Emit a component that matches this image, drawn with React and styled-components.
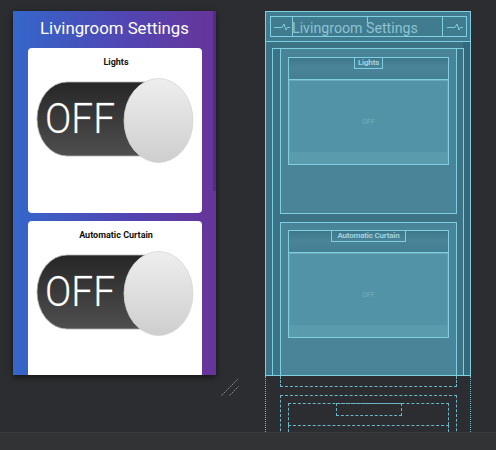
import React from 'react';
import styled, { createGlobalStyle } from 'styled-components';

const GlobalStyle = createGlobalStyle`
  html, body {
    margin: 0;
    padding: 0;
    background: #2b2d30;
    font-family: Roboto, "Liberation Sans", sans-serif;
  }
`;

const Canvas = styled.div`
  width: 496px;
  height: 450px;
  display: flex;
  flex-direction: column;
  overflow: hidden;
`;

const Stage = styled.div`
  height: 432px;
  flex-shrink: 0;
  display: flex;
  align-items: flex-start;
  gap: 26px;
  padding: 11px 0 0 13px;
  box-sizing: border-box;
  overflow: hidden;
`;

const StatusBar = styled.div`
  flex: 1;
  background: #323335;
  border-top: 1px solid #393a3c;
`;

/* ---------- design preview ---------- */

const PreviewColumn = styled.div`
  display: flex;
  flex-direction: column;
`;

const Phone = styled.div`
  width: 203px;
  height: 364px;
  display: flex;
  background: linear-gradient(90deg, #3467cb 0%, #5146b3 55%, #673499 100%);
  box-shadow: 0 2px 6px rgba(0, 0, 0, 0.55);
  overflow: hidden;
`;

const PhoneContent = styled.div`
  flex: 1;
  display: flex;
  flex-direction: column;
`;

const ScrollTrack = styled.div`
  width: 3px;
  display: flex;
  flex-direction: column;
`;

const ScrollThumb = styled.div`
  height: 180px;
  background: rgba(20, 10, 60, 0.22);
`;

const AppTitle = styled.div`
  height: 30px;
  line-height: 34px;
  text-align: center;
  color: #ffffff;
  font-size: 16.8px;
  padding-left: 3px;
`;

const CardList = styled.div`
  display: flex;
  flex-direction: column;
  gap: 8px;
  padding: 7px 11px 0 15px;
`;

const Card = styled.div`
  height: 165px;
  flex-shrink: 0;
  background: #ffffff;
  border-radius: 4px;
  padding: 8px 6px 0 8px;
  box-sizing: border-box;
  display: flex;
  flex-direction: column;
`;

const CardHeader = styled.div`
  height: 22px;
  font-size: 9px;
  line-height: 12px;
  font-weight: 700;
  color: #111111;
  text-align: center;
`;

const ToggleSvg = styled.svg`
  width: 160px;
  height: 85px;
  display: block;
`;

const ResizeHandle = styled.svg`
  width: 18px;
  height: 18px;
  margin: 3px 0 0 208px;
  display: block;
`;

const Toggle = ({ id }) => (
  <ToggleSvg viewBox="0 0 160 85" preserveAspectRatio="none">
    <defs>
      <linearGradient id={`pill-${id}`} x1="0" y1="0" x2="0" y2="1">
        <stop offset="0" stopColor="#262626" />
        <stop offset="1" stopColor="#4f4f4f" />
      </linearGradient>
      <linearGradient id={`knob-${id}`} x1="0" y1="0" x2="0" y2="1">
        <stop offset="0" stopColor="#eeeeee" />
        <stop offset="1" stopColor="#cecece" />
      </linearGradient>
    </defs>
    <rect x="1" y="4" width="150" height="74" rx="30" ry="37" fill={`url(#pill-${id})`} stroke="#b4b4b4" strokeWidth="0.8" />
    <text
      x="9"
      y="55"
      fontSize="42"
      fontWeight="300"
      textLength="70"
      lengthAdjust="spacingAndGlyphs"
      fill="#ffffff"
      stroke="#909090"
      strokeWidth="0.5"
      paintOrder="stroke"
      fontFamily="Roboto, 'Liberation Sans', sans-serif"
    >
      OFF
    </text>
    <ellipse cx="122.5" cy="42.5" rx="34.5" ry="42" fill={`url(#knob-${id})`} stroke="#d6d6d6" strokeWidth="0.8" />
  </ToggleSvg>
);

/* ---------- blueprint ---------- */

const Blueprint = styled.div`
  width: 206px;
  display: flex;
  flex-direction: column;
`;

const line = '#7fcfe2';

const BpScreen = styled.div`
  height: 365px;
  box-sizing: border-box;
  border: 1px solid ${line};
  background: linear-gradient(90deg, #3d7387 calc(100% - 7px), #34697c 0);
  display: flex;
  flex-direction: column;
  overflow: hidden;
`;

const BpTitleRow = styled.div`
  height: 30px;
  flex-shrink: 0;
  box-sizing: border-box;
  border-bottom: 1px solid ${line};
  background: #417b8f;
  padding: 4px 3px 0 4px;
`;

const BpTitleBox = styled.div`
  height: 21px;
  box-sizing: border-box;
  border: 1px solid ${line};
  display: flex;
`;

const BpIcon = styled.div`
  width: ${p => p.$w}px;
  box-sizing: border-box;
  border-left: ${p => (p.$right ? `1px solid ${line}` : 'none')};
  border-right: ${p => (p.$right ? 'none' : `1px solid ${line}`)};
  display: flex;
  align-items: center;
  justify-content: center;
`;

const BpTitleText = styled.div`
  flex: 1;
  position: relative;
  font-size: 14.2px;
  line-height: 19px;
  padding-top: 2px;
  color: #8cc3d2;
  white-space: nowrap;
  overflow: hidden;
  margin-left: -1px;

  &::before {
    content: '';
    position: absolute;
    left: 75px;
    top: 0;
    width: 1px;
    height: 6px;
    background: ${line};
  }
`;

const BpBody = styled.div`
  flex: 1;
  padding: 6px 6px 0 6px;
`;

const BpScroll = styled.div`
  height: 100%;
  box-sizing: border-box;
  border: 1px solid ${line};
  border-bottom: none;
  padding: 0 6px 0 7px;
  display: flex;
  flex-direction: column;
  gap: 8px;
`;

const BpCard = styled.div`
  height: ${p => (p.$first ? 165 : 166)}px;
  flex-shrink: 0;
  box-sizing: border-box;
  border: 1px solid ${line};
  border-top-width: ${p => (p.$first ? 0 : 1)}px;
  background: #4a8498;
  padding: ${p => (p.$first ? 8 : 7)}px 7px 0 7px;
  display: flex;
  flex-direction: column;
`;

const BpHeader = styled.div`
  height: 22px;
  box-sizing: border-box;
  border: 1px solid ${line};
  border-bottom: none;
  background: linear-gradient(#3f788b 0%, #4a8498 45%, #447e92 100%);
  display: flex;
  justify-content: center;
`;

const BpLabel = styled.div`
  height: 12px;
  width: ${p => p.$w}px;
  margin-top: -1px;
  box-sizing: border-box;
  border: 1px solid ${line};
  font-size: 8px;
  line-height: 10px;
  font-weight: 700;
  color: #9ed2df;
  text-align: center;
  white-space: nowrap;
  overflow: hidden;
  letter-spacing: -0.2px;
`;

const BpImage = styled.div`
  height: 86px;
  box-sizing: border-box;
  border: 1px solid ${line};
  background: linear-gradient(#5393a7 0%, #5393a7 86%, #5a9bae 86%, #5a9bae 100%);
  box-shadow: inset 0 1px 0 #6aaabd, inset 1px 0 0 #5f9fb2, inset -1px 0 0 #5f9fb2;
  display: flex;
  align-items: center;
  justify-content: center;
  font-size: 7px;
  color: #73b0c1;
`;

const BpOverflow = styled.div`
  height: 60px;
  box-sizing: border-box;
  border-left: 1px dotted #6fb8cb;
  border-right: 1px dotted #6fb8cb;
  padding: 0 13px 0 14px;
  display: flex;
  flex-direction: column;
  gap: 8px;
`;

const GhostTail = styled.div`
  height: 11px;
  box-sizing: border-box;
  border: 1px dashed #6cb6c9;
  border-top: none;
`;

const GhostCard = styled.div`
  flex: 1;
  border: 1px dashed #6cb6c9;
  border-bottom: none;
  padding: 7px 7px 0 7px;
  display: flex;
  flex-direction: column;
`;

const GhostHeader = styled.div`
  height: 22px;
  flex-shrink: 0;
  box-sizing: border-box;
  border: 1px dashed #6cb6c9;
  border-bottom: none;
  display: flex;
  justify-content: center;
`;

const GhostLabel = styled.div`
  width: 66px;
  height: 13px;
  margin-top: -1px;
  box-sizing: border-box;
  border: 1px dashed #6cb6c9;
`;

const GhostImage = styled.div`
  flex: 1;
  border: 1px dashed #6cb6c9;
  border-bottom: none;
`;

const Pulse = () => (
  <svg width="16" height="10" viewBox="0 0 16 10">
    <path d="M0 5.5 H8 L10 2 L12 8 L13.5 5.5 H16" fill="none" stroke={line} strokeWidth="1" />
  </svg>
);

const cards = [
  { title: 'Lights', label: 29 },
  { title: 'Automatic Curtain', label: 75 },
];

export default function App() {
  return (
    <Canvas>
      <GlobalStyle />
      <Stage>
        <PreviewColumn>
          <Phone>
            <PhoneContent>
              <AppTitle>Livingroom Settings</AppTitle>
              <CardList>
                {cards.map((c, i) => (
                  <Card key={c.title}>
                    <CardHeader>{c.title}</CardHeader>
                    <Toggle id={i} />
                  </Card>
                ))}
              </CardList>
            </PhoneContent>
            <ScrollTrack>
              <ScrollThumb />
            </ScrollTrack>
          </Phone>
          <ResizeHandle viewBox="0 0 18 18">
            <path d="M0.5 17.5 L17.5 0.5 M8.5 17.5 L17.5 8.5" stroke="#8a8b8d" strokeWidth="1" strokeDasharray="2 1" fill="none" />
          </ResizeHandle>
        </PreviewColumn>

        <Blueprint>
          <BpScreen>
            <BpTitleRow>
              <BpTitleBox>
                <BpIcon $w={22}><Pulse /></BpIcon>
                <BpTitleText>Livingroom Settings</BpTitleText>
                <BpIcon $w={24} $right><Pulse /></BpIcon>
              </BpTitleBox>
            </BpTitleRow>
            <BpBody>
              <BpScroll>
                {cards.map((c, i) => (
                  <BpCard key={c.title} $first={i === 0}>
                    <BpHeader>
                      <BpLabel $w={c.label}>{c.title}</BpLabel>
                    </BpHeader>
                    <BpImage>OFF</BpImage>
                  </BpCard>
                ))}
              </BpScroll>
            </BpBody>
          </BpScreen>
          <BpOverflow>
            <GhostTail />
            <GhostCard>
              <GhostHeader>
                <GhostLabel />
              </GhostHeader>
              <GhostImage />
            </GhostCard>
          </BpOverflow>
        </Blueprint>
      </Stage>
      <StatusBar />
    </Canvas>
  );
}
